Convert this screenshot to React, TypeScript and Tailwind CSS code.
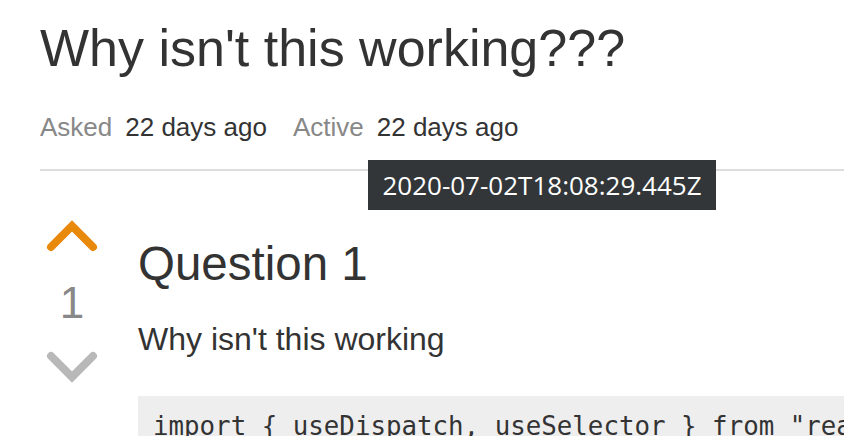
import React from "react";

const sans = { fontFamily: '"Liberation Sans", Arial, sans-serif' };

function VoteArrow({ dir, color }: { dir: "up" | "down"; color: string }) {
  return (
    <svg width="52" height="34" viewBox="0 0 52 34" className="block">
      {dir === "up" ? (
        <polyline points="5,28 26,7 47,28" fill="none" stroke={color} strokeWidth="8" strokeLinecap="round" strokeLinejoin="miter" />
      ) : (
        <polyline points="5,6 26,27 47,6" fill="none" stroke={color} strokeWidth="8" strokeLinecap="round" strokeLinejoin="miter" />
      )}
    </svg>
  );
}

export default function App() {
  return (
    <div className="relative w-[844px] h-[436px] overflow-hidden bg-white text-[#333]" style={sans}>
      <div className="pl-[40px] pt-[18px]">
        <h1 className="text-[52px] leading-[60px] font-normal">Why isn't this working???</h1>
        <div className="mt-[34px] flex items-baseline text-[26px] leading-[30px]">
          <span className="text-[#888]">Asked</span>
          <span className="ml-[13px]">22 days ago</span>
          <span className="ml-[26px] text-[#888]">Active</span>
          <span className="ml-[13px]">22 days ago</span>
        </div>
        <div className="mt-[27px] h-[2px] bg-[#ddd]" />
      </div>

      <div className="flex pt-[48px]">
        <div className="ml-[46px] w-[52px] flex flex-col items-center">
          <VoteArrow dir="up" color="#e8890c" />
          <div className="mt-[26px] text-[44px] leading-[48px] text-[#888]">1</div>
          <div className="mt-[23px]">
            <VoteArrow dir="down" color="#b8b8b8" />
          </div>
        </div>
        <div className="ml-[40px] flex-1 min-w-0">
          <h2 className="text-[47.5px] leading-[56px] mt-[17px] font-normal">Question 1</h2>
          <p className="mt-[27px] text-[32px] leading-[40px]">Why isn't this working</p>
          <div className="mt-[37px] bg-[#eee] pl-[15px] pt-[15px] pb-[14px] whitespace-pre font-['DejaVu_Sans_Mono',monospace] text-[25.8px] leading-[30px] text-[#333]">
            import {"{"} useDispatch, useSelector {"}"} from "react
          </div>
        </div>
      </div>

      <div
        className="absolute left-[368px] top-[160px] w-[348px] h-[50px] bg-[#323639] text-white flex items-center justify-center text-[26px]"
        style={{ fontFamily: '"Open Sans", sans-serif' }}
      >
        2020-07-02T18:08:29.445Z
      </div>
    </div>
  );
}
